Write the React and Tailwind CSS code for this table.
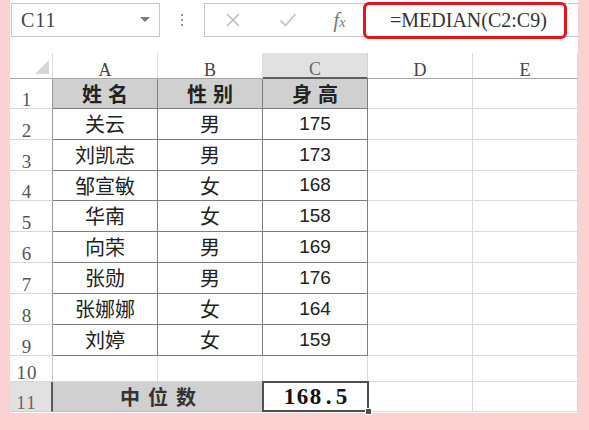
import React from 'react';

const DATA = [
  { n: 1, h: 30, a: '姓名', b: '性别', c: '身高', head: true },
  { n: 2, h: 31, a: '关云', b: '男', c: '175' },
  { n: 3, h: 31, a: '刘凯志', b: '男', c: '173' },
  { n: 4, h: 30, a: '邹宣敏', b: '女', c: '168' },
  { n: 5, h: 31, a: '华南', b: '女', c: '158' },
  { n: 6, h: 31, a: '向荣', b: '男', c: '169' },
  { n: 7, h: 31, a: '张勋', b: '男', c: '176' },
  { n: 8, h: 31, a: '张娜娜', b: '女', c: '164' },
  { n: 9, h: 31, a: '刘婷', b: '女', c: '159' },
];

const rowNum =
  "w-[43px] shrink-0 flex items-end justify-center pr-[8px] border-r border-b border-r-[#9a9a9a] border-b-[#d8d8d8] font-['Liberation_Serif',serif] text-[19px] tracking-[1px] leading-[16px] text-[#555]";

function DataRow({ r }) {
  const h = r.h === 30 ? 'h-[30px]' : 'h-[31px]';
  const cjkCell = r.head
    ? "w-[105px] shrink-0 flex items-center justify-center border-r border-b border-[#7f7f7f] bg-[#d0d0d0] font-['Noto_Sans_CJK_SC',sans-serif] font-bold text-[20px] tracking-[6px] pl-[6px] text-[#222]"
    : "w-[105px] shrink-0 flex items-center justify-center border-r border-b border-[#7f7f7f] font-['Noto_Sans_CJK_SC',sans-serif] text-[20px] text-[#222]";
  const numCell = r.head
    ? cjkCell
    : "w-[105px] shrink-0 flex items-center justify-center border-r border-b border-[#7f7f7f] font-['Liberation_Sans',sans-serif] text-[19px] text-[#222]";
  const blank = 'w-[105px] shrink-0 border-r border-b border-[#dadada]';
  return (
    <div className={`flex ${h}`}>
      <div className={rowNum}>{r.n}</div>
      <div className={cjkCell}>{r.a}</div>
      <div className={cjkCell}>{r.b}</div>
      <div className={numCell}>{r.c}</div>
      <div className={blank}></div>
      <div className={blank}></div>
    </div>
  );
}

function ColHeader({ label, active }) {
  return (
    <div
      className={
        active
          ? "w-[105px] shrink-0 flex items-end justify-center pb-[1px] bg-[#e1e1e1] border-r border-r-[#d0d0d0] border-b-2 border-b-[#5e5e5e] font-['Liberation_Serif',serif] text-[18px] leading-[14px] text-[#666]"
          : "w-[105px] shrink-0 flex items-end justify-center pb-[1px] border-r border-r-[#dcdcdc] border-b border-b-[#a6a6a6] font-['Liberation_Serif',serif] text-[18px] leading-[14px] text-[#444]"
      }
    >
      {label}
    </div>
  );
}

export default function App() {
  return (
    <div className="w-[589px] h-[430px] bg-[#fcd1d1] pl-[10px] pr-[11px] pb-[17px] flex">
      <div className="w-[568px] h-[413px] bg-white flex flex-col">
        {/* toolbar */}
        <div className="h-[53px] shrink-0 flex items-start pt-[3px]">
          <div className="ml-[1px] w-[149px] h-[34px] border border-[#c6c6c6] bg-white flex items-center justify-between pl-[9px] pr-[9px]">
            <span className="font-['Liberation_Serif',serif] text-[20px] tracking-[1px] text-[#444] leading-none">C11</span>
            <svg width="10" height="6" viewBox="0 0 10 6">
              <polygon points="0,0 10,0 5,5" fill="#7a7a7a" />
            </svg>
          </div>
          <div className="w-[44px] h-[34px] flex flex-col items-center justify-center gap-[3px]">
            <div className="w-[2px] h-[2px] bg-[#9a9a9a]"></div>
            <div className="w-[2px] h-[2px] bg-[#9a9a9a]"></div>
            <div className="w-[2px] h-[2px] bg-[#9a9a9a]"></div>
          </div>
          <div className="flex-1 h-[34px] border border-[#c6c6c6] border-r-0 flex items-center">
            <div className="w-[55px] flex justify-center">
              <svg width="16" height="16" viewBox="0 0 16 16">
                <path d="M2 2 L14 14 M14 2 L2 14" stroke="#bdbdbd" strokeWidth="1.6" fill="none" />
              </svg>
            </div>
            <div className="w-[56px] flex justify-center">
              <svg width="18" height="16" viewBox="0 0 18 16">
                <path d="M1.5 8.5 L6.5 13.5 L16.5 2" stroke="#c4c4c4" strokeWidth="1.8" fill="none" />
              </svg>
            </div>
            <div className="w-[47px] flex justify-center font-['Liberation_Serif',serif] italic text-[20px] text-[#777] leading-none">
              <span>f</span>
              <span className="text-[14px] mt-[6px]">x</span>
            </div>
            <div className="w-[204px] h-[37px] shrink-0 border-[3px] border-[#e3151b] rounded-[6px] bg-white flex items-center pl-[24px] font-['Liberation_Serif',serif] text-[20px] text-[#333] leading-none">
              =MEDIAN(C2:C9)
            </div>
          </div>
        </div>

        {/* column headers */}
        <div className="flex h-[26px] shrink-0">
          <div className="w-[43px] shrink-0 flex items-end justify-end pr-[3px] pb-[4px] border-r border-r-[#dadada] border-b border-b-[#a6a6a6]">
            <svg width="14" height="14" viewBox="0 0 14 14">
              <polygon points="14,0 14,14 0,14" fill="#d6d6d6" />
            </svg>
          </div>
          <ColHeader label="A" />
          <ColHeader label="B" />
          <ColHeader label="C" active />
          <ColHeader label="D" />
          <ColHeader label="E" />
        </div>

        {DATA.map((r) => (
          <DataRow key={r.n} r={r} />
        ))}

        {/* row 10 */}
        <div className="flex h-[26px]">
          <div className="w-[43px] shrink-0 flex items-end justify-center pr-[8px] border-r border-b border-r-[#c8c8c8] border-b-[#d8d8d8] font-['Liberation_Serif',serif] text-[19px] tracking-[1px] leading-[16px] text-[#555]">10</div>
          <div className="w-[105px] shrink-0 border-r border-b border-[#dadada]"></div>
          <div className="w-[105px] shrink-0 border-r border-b border-[#dadada]"></div>
          <div className="w-[105px] shrink-0 border-r border-b border-[#dadada]"></div>
          <div className="w-[105px] shrink-0 border-r border-b border-[#dadada]"></div>
          <div className="w-[105px] shrink-0 border-r border-b border-[#dadada]"></div>
        </div>

        {/* row 11 */}
        <div className="flex h-[30px]">
          <div className="w-[43px] shrink-0 flex items-end justify-center pr-[8px] bg-[#e1e1e1] border-r-2 border-r-[#5a5a5a] border-b border-b-[#d0d0d0] font-['Liberation_Serif',serif] text-[19px] tracking-[1px] leading-[16px] text-[#666]">11</div>
          <div className="w-[210px] shrink-0 flex items-center justify-center bg-[#d0d0d0] border-b border-[#bcbcbc] font-['Noto_Sans_CJK_SC',sans-serif] font-bold text-[20px] tracking-[8px] pl-[8px] text-[#333]">
            中位数
          </div>
          <div className="w-[105px] shrink-0 relative flex items-center justify-center bg-white font-['Liberation_Serif',serif] font-bold text-[23px] text-[#111]">
            <div className="flex pt-[1px]">
              <span className="w-[13px] text-center">1</span>
              <span className="w-[13px] text-center">6</span>
              <span className="w-[13px] text-center">8</span>
              <span className="w-[13px] text-center">.</span>
              <span className="w-[13px] text-center">5</span>
            </div>
            <div className="absolute -left-[1px] -top-[1px] -right-[1px] bottom-0 border-2 border-[#4f4f4f]"></div>
            <div className="absolute -right-[4px] -bottom-[3px] w-[7px] h-[7px] bg-[#4f4f4f] border border-white"></div>
          </div>
          <div className="w-[105px] shrink-0 border-r border-b border-[#dadada]"></div>
          <div className="w-[105px] shrink-0 border-r border-b border-[#dadada]"></div>
        </div>
      </div>
    </div>
  );
}
